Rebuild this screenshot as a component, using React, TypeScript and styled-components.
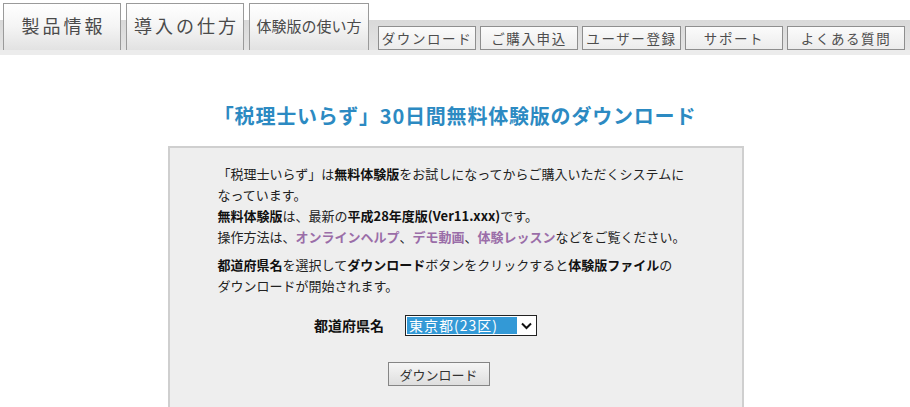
import styled, { createGlobalStyle } from "styled-components";

const GlobalStyle = createGlobalStyle`
  html, body {
    margin: 0;
    padding: 0;
    background: #ffffff;
  }
  body {
    font-family: "Noto Sans CJK JP", "Noto Sans", sans-serif;
    color: #222;
    overflow: hidden;
  }
`

const NavBar = styled.nav`
  display: flex;
  align-items: flex-start;
  height: 55px;
  padding-left: 3px;
  background: linear-gradient(
    to bottom,
    #ffffff 0px,
    #ffffff 20px,
    #d9d9d9 20px,
    #e4e4e4 50px,
    #ececec 50px,
    #ececec 55px
  );
`

const Tab = styled.a<{ $w: number; $size: number }>`
  box-sizing: border-box;
  width: ${(p) => p.$w}px;
  height: 47px;
  margin-top: 3px;
  margin-right: 5px;
  display: flex;
  align-items: center;
  justify-content: center;
  border: 1px solid #9a9a9a;
  border-bottom: none;
  background: linear-gradient(to bottom, #ffffff, #f4f4f4 50%, #e2e2e2);
  color: #4a4a4a;
  font-size: ${(p) => p.$size}px;
  letter-spacing: ${(p) => (p.$size > 16 ? "3px" : "0")};
  text-decoration: none;
  padding-bottom: 4px;
  padding-left: ${(p) => (p.$size > 16 ? "3px" : "0")};
`

const SubNav = styled.div`
  display: flex;
  gap: 4px;
  margin-top: 26px;
  margin-left: 4px;
`

const NavButton = styled.a<{ $w: number }>`
  box-sizing: border-box;
  width: ${(p) => p.$w}px;
  height: 24px;
  display: flex;
  align-items: center;
  justify-content: center;
  border: 1px solid #8e8e8e;
  background: linear-gradient(to bottom, #fbfbfb, #ececec);
  color: #4d4d4d;
  font-size: 13.5px;
  letter-spacing: 1.6px;
  text-decoration: none;
`

const Main = styled.main`
  display: flex;
  flex-direction: column;
  align-items: center;
`

const Title = styled.h1`
  margin: 46px 0 0;
  height: 45px;
  font-size: 20px;
  font-weight: bold;
  color: #2c8ac2;
  letter-spacing: 0.8px;
  margin-left: 0;
`

const Panel = styled.section`
  box-sizing: border-box;
  width: 576px;
  min-height: 280px;
  margin-left: 1px;
  border: 2px solid #cfcfcf;
  background: #eeeeee;
  padding: 15px 20px 0 48px;
  font-size: 13px;
  line-height: 21px;
  color: #222;
`

const Para = styled.p`
  margin: 0 0 7px;
`

const Strong = styled.b`
  font-weight: bold;
  color: #111;
`

const Link = styled.a`
  color: #9a6da8;
  font-weight: bold;
  text-decoration: none;
`

const FormRow = styled.div`
  display: flex;
  align-items: center;
  justify-content: center;
  gap: 21px;
  margin: 19px 0 0;
  padding-right: 88px;
`

const Label = styled.label`
  font-weight: bold;
  font-size: 14px;
  color: #111;
`

const SelectBox = styled.div`
  box-sizing: border-box;
  width: 132px;
  height: 21px;
  display: flex;
  align-items: stretch;
  border: 1px solid #222;
  background: #ffffff;
  padding: 1px;
`

const SelectValue = styled.span`
  flex: 1;
  background: #3399d6;
  color: #ffffff;
  font-size: 14px;
  line-height: 17px;
  padding-left: 2px;
  letter-spacing: 1px;
`

const Chevron = styled.span`
  width: 18px;
  display: flex;
  align-items: center;
  justify-content: center;
`

const ButtonRow = styled.div`
  display: flex;
  justify-content: center;
  margin-top: 26px;
  padding-right: 62px;
`

const DownloadButton = styled.button`
  box-sizing: border-box;
  width: 102px;
  height: 24px;
  border: 1px solid #858585;
  background: linear-gradient(to bottom, #f6f6f6, #dedede);
  color: #333;
  font-family: "Noto Sans CJK JP", sans-serif;
  font-size: 13px;
  padding: 0;
`

const tabs = [
  { label: "製品情報", w: 118, size: 18 },
  { label: "導入の仕方", w: 118, size: 18 },
  { label: "体験版の使い方", w: 120, size: 15 },
]

const menu = [
  { label: "ダウンロード", w: 98 },
  { label: "ご購入申込", w: 98 },
  { label: "ユーザー登録", w: 99 },
  { label: "サポート", w: 98 },
  { label: "よくある質問", w: 118 },
]

function App() {
  return (
    <>
      <GlobalStyle />
      <NavBar>
        {tabs.map((t) => (
          <Tab key={t.label} $w={t.w} $size={t.size}>
            {t.label}
          </Tab>
        ))}
        <SubNav>
          {menu.map((m) => (
            <NavButton key={m.label} $w={m.w}>
              {m.label}
            </NavButton>
          ))}
        </SubNav>
      </NavBar>
      <Main>
        <Title>「税理士いらず」30日間無料体験版のダウンロード</Title>
        <Panel>
          <Para>
            「税理士いらず」は<Strong>無料体験版</Strong>をお試しになってからご購入いただくシステムに
            <br />
            なっています。
            <br />
            <Strong>無料体験版</Strong>は、最新の<Strong>平成28年度版(Ver11.xxx)</Strong>です。
            <br />
            操作方法は、<Link>オンラインヘルプ</Link>、<Link>デモ動画</Link>、<Link>体験レッスン</Link>などをご覧ください。
          </Para>
          <Para>
            <Strong>都道府県名</Strong>を選択して<Strong>ダウンロード</Strong>ボタンをクリックすると<Strong>体験版ファイル</Strong>の
            <br />
            ダウンロードが開始されます。
          </Para>
          <FormRow>
            <Label>都道府県名</Label>
            <SelectBox>
              <SelectValue>東京都(23区)</SelectValue>
              <Chevron>
                <svg width="11" height="8" viewBox="0 0 11 8">
                  <path d="M1 1.5 L5.5 6 L10 1.5" fill="none" stroke="#111" strokeWidth="2" />
                </svg>
              </Chevron>
            </SelectBox>
          </FormRow>
          <ButtonRow>
            <DownloadButton>ダウンロード</DownloadButton>
          </ButtonRow>
        </Panel>
      </Main>
    </>
  );
}

export default App;
